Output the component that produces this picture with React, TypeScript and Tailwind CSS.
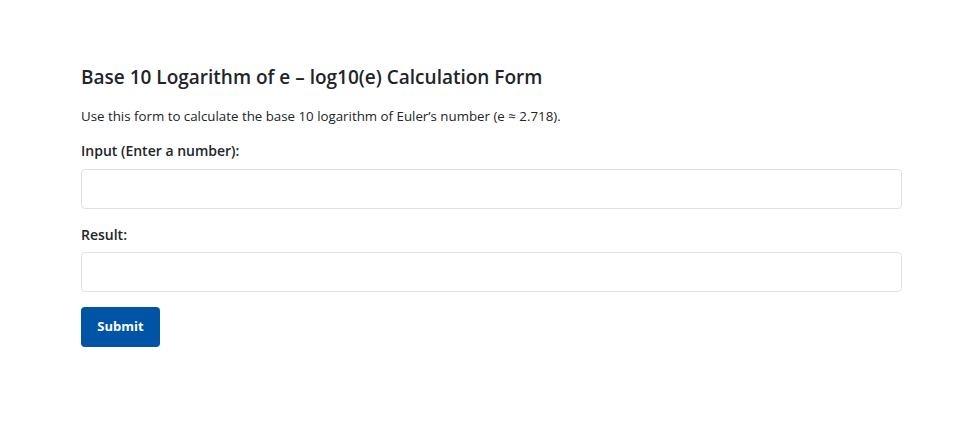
export default function App() {
  return (
    <div className="min-h-[426px] bg-white font-['Open_Sans','Noto_Sans',sans-serif] text-[#212529]">
      <div className="ml-[81px] w-[821px] pt-[64px]">
        <h2 className="text-[19px] font-semibold leading-[26px] mb-[16px]">
          Base 10 Logarithm of e – log10(e) Calculation Form
        </h2>
        <p className="text-[13.3px] leading-[20px] mb-[15px]">
          Use this form to calculate the base 10 logarithm of Euler’s number (e ≈ 2.718).
        </p>
        <form onSubmit={(e) => e.preventDefault()}>
          <label className="block text-[14px] font-semibold leading-[20px] mb-[8px]">Input (Enter a number):</label>
          <input
            type="text"
            className="block w-full h-[40px] border border-[#dee2e6] rounded-[4px] px-3 text-[14px] outline-none mb-[16px]"
          />
          <label className="block text-[14px] font-semibold leading-[20px] mb-[7px]">Result:</label>
          <input
            type="text"
            readOnly
            className="block w-full h-[40px] border border-[#dee2e6] rounded-[4px] px-3 text-[14px] outline-none mb-[15px]"
          />
          <button
            type="submit"
            className="h-[40px] w-[79px] bg-[#0054a6] text-white text-[13px] font-bold rounded-[4px]"
          >
            Submit
          </button>
        </form>
      </div>
    </div>
  )
}
